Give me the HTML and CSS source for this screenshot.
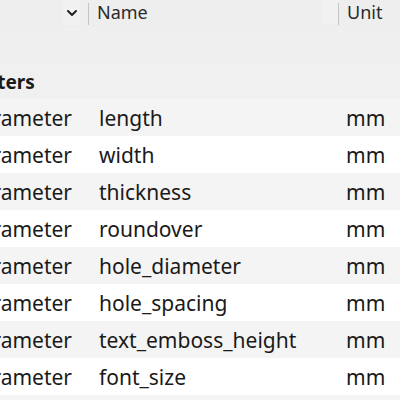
FILE: index.html
```html
<!DOCTYPE html>
<html>
<head>
<meta charset="utf-8">
<link rel="stylesheet" href="styles.css">
</head>
<body>
<div class="panel">
  <div class="table">
    <div class="header">
      <div class="hcell first">
        <span class="htext"></span>
        <span class="sortbtn">
          <svg width="12" height="8" viewBox="0 0 12 8"><path d="M2 2 L6 6 L10 2" fill="none" stroke="#222" stroke-width="2" stroke-linecap="round" stroke-linejoin="round"/></svg>
        </span>
      </div>
      <div class="hcell name"><span class="htext">Name</span><span class="hpad"></span></div>
      <div class="hcell unit"><span class="htext">Unit</span></div>
    </div>
    <div class="spacer"></div>
    <div class="section"><span>User Parameters</span></div>
    <div class="row odd"><div class="c1">User Parameter</div><div class="c2">length</div><div class="c3">mm</div></div>
    <div class="row"><div class="c1">User Parameter</div><div class="c2">width</div><div class="c3">mm</div></div>
    <div class="row odd"><div class="c1">User Parameter</div><div class="c2">thickness</div><div class="c3">mm</div></div>
    <div class="row"><div class="c1">User Parameter</div><div class="c2">roundover</div><div class="c3">mm</div></div>
    <div class="row odd"><div class="c1">User Parameter</div><div class="c2">hole_diameter</div><div class="c3">mm</div></div>
    <div class="row"><div class="c1">User Parameter</div><div class="c2">hole_spacing</div><div class="c3">mm</div></div>
    <div class="row odd"><div class="c1">User Parameter</div><div class="c2">text_emboss_height</div><div class="c3">mm</div></div>
    <div class="row"><div class="c1">User Parameter</div><div class="c2">font_size</div><div class="c3">mm</div></div>
    <div class="row odd"><div class="c1"></div><div class="c2"></div><div class="c3"></div></div>
  </div>
</div>
</body>
</html>
```
FILE: styles.css
```css
html, body {
  margin: 0;
  padding: 0;
}
.panel {
  width: 400px;
  height: 400px;
  overflow: hidden;
  background: #efefef;
  font-family: "Noto Sans", "Open Sans", sans-serif;
  color: #1a1a1a;
}
.table {
  display: flex;
  flex-direction: column;
  width: 540px;
  margin-left: -140px;
}
.header, .row {
  display: grid;
  grid-template-columns: 228px 250px 62px;
  width: 540px;
}
.header {
  height: 27px;
  background: #eeeeee;
}
.hcell {
  display: flex;
  align-items: center;
  font-size: 18px;
  color: #2a2a2a;
  height: 27px;
}
.hcell.first {
  justify-content: flex-end;
  padding-right: 8px;
}
.sortbtn {
  display: flex;
  align-items: center;
  justify-content: center;
  width: 17px;
  height: 25px;
  margin-top: -2px;
  background: #f1f1f1;
}
.hcell.name, .hcell.unit {
  padding-left: 8px;
  border-left: 1px solid #c4c4c4;
  height: 22px;
  margin-top: 3px;
  line-height: 1;
}
.hcell.name {
  justify-content: space-between;
}
.hcell .htext {
  margin-top: -5px;
}
.hpad {
  width: 17px;
  height: 25px;
  margin-top: -6px;
  background: #f1f1f1;
}
.spacer {
  height: 35px;
}
.section {
  width: 540px;
  height: 37px;
  box-sizing: border-box;
  display: flex;
  align-items: center;
  padding-left: 16px;
  padding-top: 3px;
  font-size: 19px;
  font-weight: 700;
  color: #1a1a1a;
  white-space: nowrap;
  background: #f0f0f0;
}
.row {
  height: 37px;
  align-items: center;
  font-size: 21px;
  background: #ffffff;
}
.row.odd {
  background: #f4f4f4;
}
.c1 {
  text-align: right;
  padding-right: 16px;
  white-space: nowrap;
}
.c2 {
  padding-left: 11px;
  white-space: nowrap;
}
.c3 {
  padding-left: 8px;
}
```
